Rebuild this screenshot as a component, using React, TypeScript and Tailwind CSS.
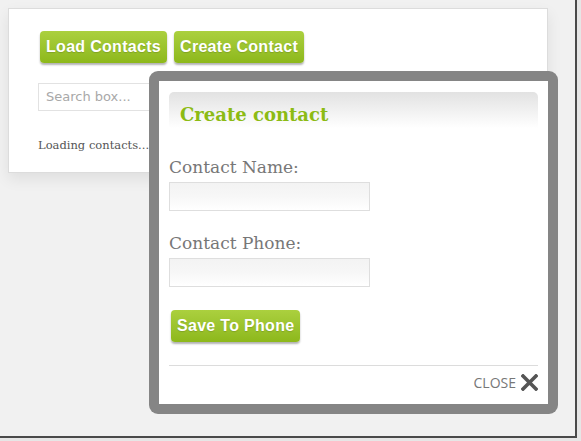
import React from "react";

const slab = { fontFamily: '"DejaVu Serif", "Liberation Serif", serif' };

function GreenButton({ children }: { children: React.ReactNode }) {
  return (
    <button
      className="h-[32px] rounded-[4px] px-[6px] text-[16px] font-bold tracking-[0.3px] text-white bg-gradient-to-b from-[#abd03e] to-[#8db81a] shadow-[0_2px_2px_rgba(0,0,0,0.3)] [text-shadow:0_1px_1px_rgba(0,0,0,0.15)]"
      style={{ fontFamily: '"Liberation Sans", Arial, sans-serif' }}
    >
      {children}
    </button>
  );
}

function Field({ label }: { label: string }) {
  return (
    <div className="flex flex-col">
      <div className="text-[17px] leading-[22px] text-[#777]" style={slab}>
        {label}
      </div>
      <div className="mt-[4px] h-[29px] w-[201px] border border-[#dedede] bg-gradient-to-b from-[#f3f3f3] via-[#f7f7f7] to-white" />
    </div>
  );
}

export default function App() {
  return (
    <div className="w-[581px] h-[441px] bg-[#e6e6e6] overflow-hidden">
      <div className="relative w-[577px] h-[438px] bg-[#f1f1f1] border-r-[2px] border-b-[2px] border-[#4a4a4a]">
        <div className="pt-[8px] pl-[8px]">
          <div className="w-[540px] h-[165px] bg-white border border-[#dcdcdc] shadow-[0_6px_14px_rgba(0,0,0,0.08)] pl-[29px] pt-[22px]">
            <div className="flex gap-[7px] pl-[2px]">
              <GreenButton>Load Contacts</GreenButton>
              <GreenButton>Create Contact</GreenButton>
            </div>
            <div
              className="mt-[20px] h-[28px] w-[200px] border border-[#e2e2e2] pl-[7px] flex items-center text-[13px] text-[#a8a8a8]"
              style={{ fontFamily: '"DejaVu Sans", Verdana, sans-serif' }}
            >
              Search box...
            </div>
            <div className="mt-[26px] text-[11.5px] text-[#555]" style={slab}>
              Loading contacts...
            </div>
          </div>
        </div>

        {/* Modal */}
        <div className="absolute left-[149px] top-[71px] w-[409px] h-[343px] rounded-[9px] bg-[#858585] p-[10px]">
          <div className="h-full w-full bg-white px-[10px] pt-[11px] flex flex-col">
            <div className="h-[36px] rounded-t-[5px] bg-gradient-to-b from-[#e2e2e2] to-white pl-[11px] pt-[11px]">
              <div className="text-[18px] font-bold leading-[24px] text-[#8cbb14]" style={slab}>
                Create contact
              </div>
            </div>
            <div className="mt-[28px]">
              <Field label="Contact Name:" />
            </div>
            <div className="mt-[21px]">
              <Field label="Contact Phone:" />
            </div>
            <div className="mt-[23px] pl-[2px]">
              <GreenButton>Save To Phone</GreenButton>
            </div>
            <div className="mt-[23px] border-t border-[#dcdcdc]" />
            <div className="mt-[6px] flex items-center justify-end gap-[5px] pr-[0px]">
              <span
                className="text-[14px] text-[#777]"
                style={{ fontFamily: '"Open Sans", "Liberation Sans", sans-serif' }}
              >
                CLOSE
              </span>
              <svg width="17" height="17" viewBox="0 0 17 17">
                <path d="M2 2 L15 15 M15 2 L2 15" stroke="#555" strokeWidth="3.6" strokeLinecap="square" />
              </svg>
            </div>
          </div>
        </div>
      </div>
    </div>
  );
}
